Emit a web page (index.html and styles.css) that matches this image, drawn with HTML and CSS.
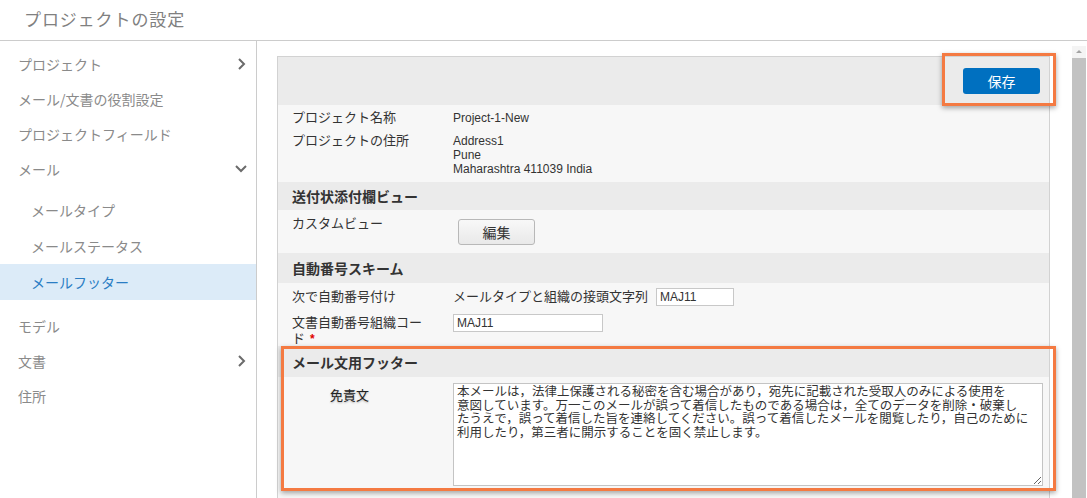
FILE: index.html
```html
<!DOCTYPE html>
<html lang="ja">
<head>
  <meta charset="UTF-8">
  <title>プロジェクトの設定</title>
  <link rel="stylesheet" href="styles.css">
</head>
<body>

<!-- ヘッダー -->
<header class="top">
  <h1 class="title">プロジェクトの設定</h1>
</header>

<div class="layout">
  <!-- 左メニュー -->
  <nav class="side">
    <ul class="menu">
      <li class="item">
        <span>プロジェクト</span>
        <svg class="chev" width="12" height="14" viewBox="0 0 12 14"><polyline points="3,2 8,7 3,12" /></svg>
      </li>
      <li class="item"><span>メール/文書の役割設定</span></li>
      <li class="item"><span>プロジェクトフィールド</span></li>
      <li class="item">
        <span>メール</span>
        <svg class="chev" width="14" height="12" viewBox="0 0 14 12"><polyline points="2,3 7,8 12,3" /></svg>
      </li>
      <li>
        <ul class="sub">
          <li class="item">メールタイプ</li>
          <li class="item">メールステータス</li>
          <li class="item active">メールフッター</li>
        </ul>
      </li>
      <li class="item"><span>モデル</span></li>
      <li class="item">
        <span>文書</span>
        <svg class="chev" width="12" height="14" viewBox="0 0 12 14"><polyline points="3,2 8,7 3,12" /></svg>
      </li>
      <li class="item"><span>住所</span></li>
    </ul>
  </nav>

  <!-- 設定内容 -->
  <main class="main">
    <div class="content">
      <div class="panel">
        <div class="toolbar">
          <button class="btn-save">保存</button>
          <div class="mark mark-save"></div>
        </div>

        <div class="row">
          <div class="lbl">プロジェクト名称</div>
          <div class="val">Project-1-New</div>
        </div>
        <div class="row row-addr">
          <div class="lbl">プロジェクトの住所</div>
          <div class="val addr">Address1<br>Pune<br>Maharashtra 411039 India</div>
        </div>

        <div class="sec">送付状添付欄ビュー</div>
        <div class="row row-view">
          <div class="lbl">カスタムビュー</div>
          <div class="val"><button class="btn-edit">編集</button></div>
        </div>

        <div class="sec sec-num">自動番号スキーム</div>
        <div class="row row-auto">
          <div class="lbl">次で自動番号付け</div>
          <div class="val inline">メールタイプと組織の接頭文字列 <input class="inp inp-s" type="text" value="MAJ11"></div>
        </div>
        <div class="row row-code">
          <div class="lbl lbl-wrap required">文書自動番号組織コード</div>
          <div class="val"><input class="inp inp-m" type="text" value="MAJ11"></div>
        </div>

        <div class="footer-sec">
          <div class="sec sec-foot">メール文用フッター</div>
          <div class="row row-disc">
            <div class="lbl lbl-disc">免責文</div>
            <div class="val">
              <textarea class="disc" wrap="off">本メールは，法律上保護される秘密を含む場合があり，宛先に記載された受取人のみによる使用を
意図しています。万一このメールが誤って着信したものである場合は，全てのデータを削除・破棄し
たうえで，誤って着信した旨を連絡してください。誤って着信したメールを閲覧したり，自己のために
利用したり，第三者に開示することを固く禁止します。</textarea>
            </div>
          </div>
          <div class="mark mark-foot"></div>
        </div>
        <div class="row row-more"></div>
      </div>
    </div>

    <div class="scrollbar">
      <div class="sb-arrow"></div>
      <div class="sb-thumb"></div>
    </div>
  </main>
</div>

</body>
</html>
```

FILE: styles.css
```css
html, body {
  margin: 0;
  padding: 0;
  height: 498px;
  overflow: hidden;
}
body {
  font-family: "Liberation Sans", "Noto Sans CJK JP", sans-serif;
  background-color: #fff;
  color: #333;
}
ul {
  list-style: none;
  margin: 0;
  padding: 0;
}

/* ヘッダー */
.top {
  height: 40px;
  border-bottom: 1px solid #ccc;
  display: flex;
  align-items: center;
}
.title {
  margin: 0 0 4px 24px;
  font-size: 17px;
  font-weight: normal;
  letter-spacing: 0.9px;
  color: #808080;
  font-family: "Noto Sans CJK JP", sans-serif;
}

.layout {
  display: flex;
  height: 457px;
}

/* 左メニュー */
.side {
  width: 256px;
  flex: none;
  border-right: 1px solid #ccc;
  padding-top: 5px;
  font-family: "Noto Sans CJK JP", sans-serif;
  font-size: 14px;
  color: #8a8a8a;
}
.menu .item {
  height: 35px;
  display: flex;
  align-items: center;
  justify-content: space-between;
  padding: 0 8px 0 18px;
}
.sub {
  padding: 6px 0 8px;
}
.sub .item {
  height: 36px;
  padding-left: 31px;
}
.sub .item.active {
  background-color: #dcebf8;
  color: #2a7dc4;
}
.chev {
  fill: none;
  stroke: #6b6b6b;
  stroke-width: 2;
}

/* メイン */
.main {
  flex: 1;
  display: flex;
  min-width: 0;
}
.content {
  flex: 1;
  padding: 15px 22px 0 20px;
  overflow: hidden;
}
.panel {
  border: 1px solid #d2d2d2;
  background-color: #f7f7f7;
}
.toolbar {
  position: relative;
  height: 48px;
  background-color: #ebebeb;
  display: flex;
  align-items: center;
  justify-content: flex-end;
  padding-right: 9px;
}
.btn-save {
  width: 77px;
  height: 26px;
  border: none;
  border-radius: 3px;
  background-color: #0070c0;
  color: #fff;
  font-family: "Noto Sans CJK JP", sans-serif;
  font-size: 14px;
  padding: 0;
}

/* 注目枠（オレンジ） */
.mark {
  position: absolute;
  border: 3px solid #f47a42;
  box-shadow: 0 2px 5px rgba(0, 0, 0, 0.35);
  pointer-events: none;
}
.mark-save {
  top: -4px;
  right: -7px;
  width: 108px;
  height: 47px;
}
.mark-foot {
  top: 0;
  left: 3px;
  right: -7px;
  height: 139px;
}

/* 行 */
.row {
  display: flex;
  padding: 5px 0 3px 14px;
  font-size: 13px;
}
.lbl {
  width: 140px;
  padding-right: 21px;
  flex: none;
  line-height: 16px;
  color: #333;
}
.val {
  font-size: 12px;
  line-height: 16px;
  color: #333;
}
.addr {
  padding-top: 1px;
  line-height: 14px;
}
.row-addr {
  padding-top: 4px;
  padding-bottom: 6px;
}
.sec {
  height: 28px;
  line-height: 28px;
  background-color: #ebebeb;
  padding-left: 14px;
  font-family: "Noto Sans CJK JP", sans-serif;
  font-weight: bold;
  font-size: 14px;
  color: #333;
}
.sec-num {
  height: 30px;
  line-height: 30px;
}
.sec-foot {
  height: 31px;
  line-height: 32px;
}
.row-view {
  padding-top: 6px;
  padding-bottom: 8px;
}
.btn-edit {
  margin: 3px 0 0 5px;
  width: 77px;
  height: 26px;
  border: 1px solid #b8b8b8;
  border-radius: 3px;
  background: linear-gradient(#f8f8f8, #e9e9e9);
  font-family: "Noto Sans CJK JP", sans-serif;
  font-size: 14px;
  color: #333;
  padding: 0;
}
.row-auto {
  padding-top: 6px;
  padding-bottom: 4px;
}
.inline {
  display: flex;
  align-items: center;
  font-size: 13px;
  height: 16px;
}
.inp {
  height: 18px;
  box-sizing: border-box;
  border: 1px solid #c8c8c8;
  background: #fff;
  font-family: "Liberation Sans", sans-serif;
  font-size: 12px;
  color: #333;
  padding: 0 3px;
  margin: 0;
}
.inp-s {
  width: 78px;
  margin-left: 8px;
}
.inp-m {
  width: 150px;
}
.row-code {
  padding-top: 5px;
  padding-bottom: 0;
}
.lbl-wrap {
  line-height: 16px;
  padding-top: 1px;
  height: 31px;
}
.required::after {
  content: "*";
  color: #e00000;
  font-weight: bold;
  font-size: 12px;
  margin-left: 5px;
}

/* フッター */
.footer-sec {
  position: relative;
}
.row-disc {
  padding-top: 6px;
  padding-bottom: 5px;
}
.lbl-disc {
  padding-top: 4px;
  padding-left: 38px;
  width: 102px;
  font-family: "Noto Sans CJK JP", sans-serif;
  color: #222;
  text-shadow: 0 1px 2px rgba(0, 0, 0, 0.3);
}
.disc {
  display: block;
  width: 590px;
  height: 103px;
  box-sizing: border-box;
  border: 1px solid #c4c4c4;
  background: #fff;
  font-family: "Noto Sans CJK JP", sans-serif;
  font-size: 12.5px;
  line-height: 13.6px;
  color: #333;
  padding: 0 3px;
  margin: 0;
  overflow: hidden;
  resize: both;
}
.row-more {
  height: 20px;
}

/* スクロールバー */
.scrollbar {
  width: 15px;
  flex: none;
  display: flex;
  flex-direction: column;
  padding-top: 5px;
}
.sb-arrow {
  height: 12px;
  background-color: #f4f4f4;
  position: relative;
  margin-right: 1px;
}
.sb-arrow::after {
  content: "";
  position: absolute;
  left: 4px;
  top: 4px;
  border-left: 3px solid transparent;
  border-right: 3px solid transparent;
  border-bottom: 3px solid #a3a3a3;
}
.sb-thumb {
  flex: 1;
  background-color: #c2c2c2;
  margin-right: 1px;
}
```
